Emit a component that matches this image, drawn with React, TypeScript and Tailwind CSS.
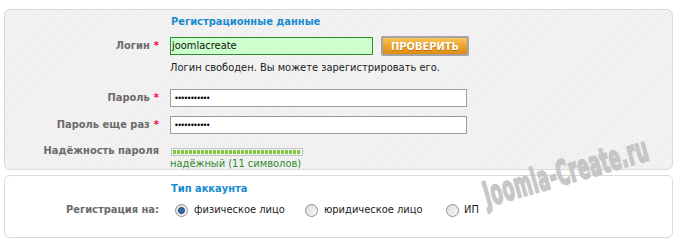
import React from 'react';

const Label = ({ children, req }: { children: React.ReactNode; req?: boolean }) => (
  <div className="text-right pr-[1px] font-bold text-[#6b6b6b] whitespace-nowrap">
    {children}
    {req && <span className="text-[#ff0033] ml-[4px]">*</span>}
  </div>
);

const Radio = ({ checked }: { checked?: boolean }) => (
  <div className="w-[13px] h-[13px] rounded-full border border-[#8f8f8f] bg-gradient-to-br from-[#dcdcdc] to-[#f8f8f8] flex items-center justify-center shrink-0">
    {checked && <div className="w-[7px] h-[7px] rounded-full bg-[#2d6db8] border border-[#1b3e66]" />}
  </div>
);

export default function App() {
  const segments = Array.from({ length: 32 });

  return (
    <div className="relative w-[678px] h-[243px] bg-white pl-[4px] pr-[5px] pt-[9px] text-[11px] leading-[14px] font-['DejaVu_Sans_Condensed','DejaVu_Sans',sans-serif] overflow-hidden">
      {/* Registration data */}
      <div className="h-[161px] rounded-[6px] border border-[#dadada] bg-[repeating-linear-gradient(135deg,#f3f3f3_0px,#f3f3f3_2px,#ededed_2px,#ededed_3px)]">
        <div className="grid grid-cols-[155px_1fr] gap-x-[10px]">
          <div className="h-[24px]" />
          <div className="h-[24px] flex items-center pl-[1px] font-bold text-[#1a8bd0]">Регистрационные данные</div>

          <div className="h-[24px] flex items-center justify-end"><Label req>Логин</Label></div>
          <div className="h-[24px] flex items-center gap-[8px]">
            <div className="w-[203px] h-[18px] border border-[#2a8f2a] bg-[#ccffcc] flex items-center pl-[1px] text-[#111]">joomlacreate</div>
            <button className="w-[88px] h-[20px] rounded-[2px] border-2 border-[#a3a3a3] bg-gradient-to-b from-[#f6c45c] via-[#eba52a] to-[#e08c12] text-white font-bold text-[11px] leading-none [text-shadow:0_1px_0_#b86a00] flex items-center justify-center">
              ПРОВЕРИТЬ
            </button>
          </div>

          <div className="h-[20px]" />
          <div className="h-[20px] flex items-center text-[#1c1c1c]">Логин свободен. Вы можете зарегистрировать его.</div>

          <div className="h-[6px]" />
          <div className="h-[6px]" />

          <div className="h-[27px] flex items-center justify-end"><Label req>Пароль</Label></div>
          <div className="h-[27px] flex items-center">
            <div className="w-[297px] h-[18px] border border-[#9c9c9c] bg-white flex items-center pl-[3px] text-[9px] tracking-[-1.6px] text-black">•••••••••••</div>
          </div>

          <div className="h-[27px] flex items-center justify-end"><Label req>Пароль еще раз</Label></div>
          <div className="h-[27px] flex items-center">
            <div className="w-[297px] h-[18px] border border-[#9c9c9c] bg-white flex items-center pl-[3px] text-[9px] tracking-[-1.6px] text-black">•••••••••••</div>
          </div>

          <div className="h-[6px]" />
          <div className="h-[6px]" />

          <div><Label>Надёжность пароля</Label></div>
          <div className="pl-[1px]">
            <div className="mt-[4px] w-[132px] h-[8px] border border-[#c4c4c4] bg-[#f4f4f4] flex items-center gap-[1px] px-[1px]">
              {segments.map((_, i) => (
                <div key={i} className="w-[3px] h-[4px] bg-[#80c83c]" />
              ))}
            </div>
            <div className="text-[#2f8a2f] mt-[1px] -ml-[1px]">надёжный (11 символов)</div>
          </div>
        </div>
      </div>

      {/* Account type */}
      <div className="mt-[5px] h-[63px] rounded-[6px] border border-[#dadada] bg-white">
        <div className="grid grid-cols-[155px_1fr] gap-x-[10px]">
          <div className="h-[26px]" />
          <div className="h-[26px] flex items-center pl-[1px] font-bold text-[#1a8bd0]">Тип аккаунта</div>

          <div className="h-[16px] flex items-center justify-end"><Label>Регистрация на:</Label></div>
          <div className="h-[16px] flex items-center pl-[5px] text-[#1c1c1c]">
            <div className="w-[130px] flex items-center gap-[6px]"><Radio checked />физическое лицо</div>
            <div className="w-[141px] flex items-center gap-[6px]"><Radio />юридическое лицо</div>
            <div className="flex items-center gap-[5px]"><Radio />ИП</div>
          </div>
        </div>
      </div>

      {/* Watermark */}
      <div className="absolute left-[484px] top-[178px] -rotate-[16deg] origin-left pointer-events-none">
        <div className="origin-left scale-x-[0.5] text-[34px] leading-none font-bold text-[#c2c2c2] [-webkit-text-stroke:2px_#c2c2c2] tracking-[1px] whitespace-nowrap font-['DejaVu_Sans',sans-serif] opacity-90">
          Joomla-Create.ru
        </div>
      </div>
    </div>
  );
}
